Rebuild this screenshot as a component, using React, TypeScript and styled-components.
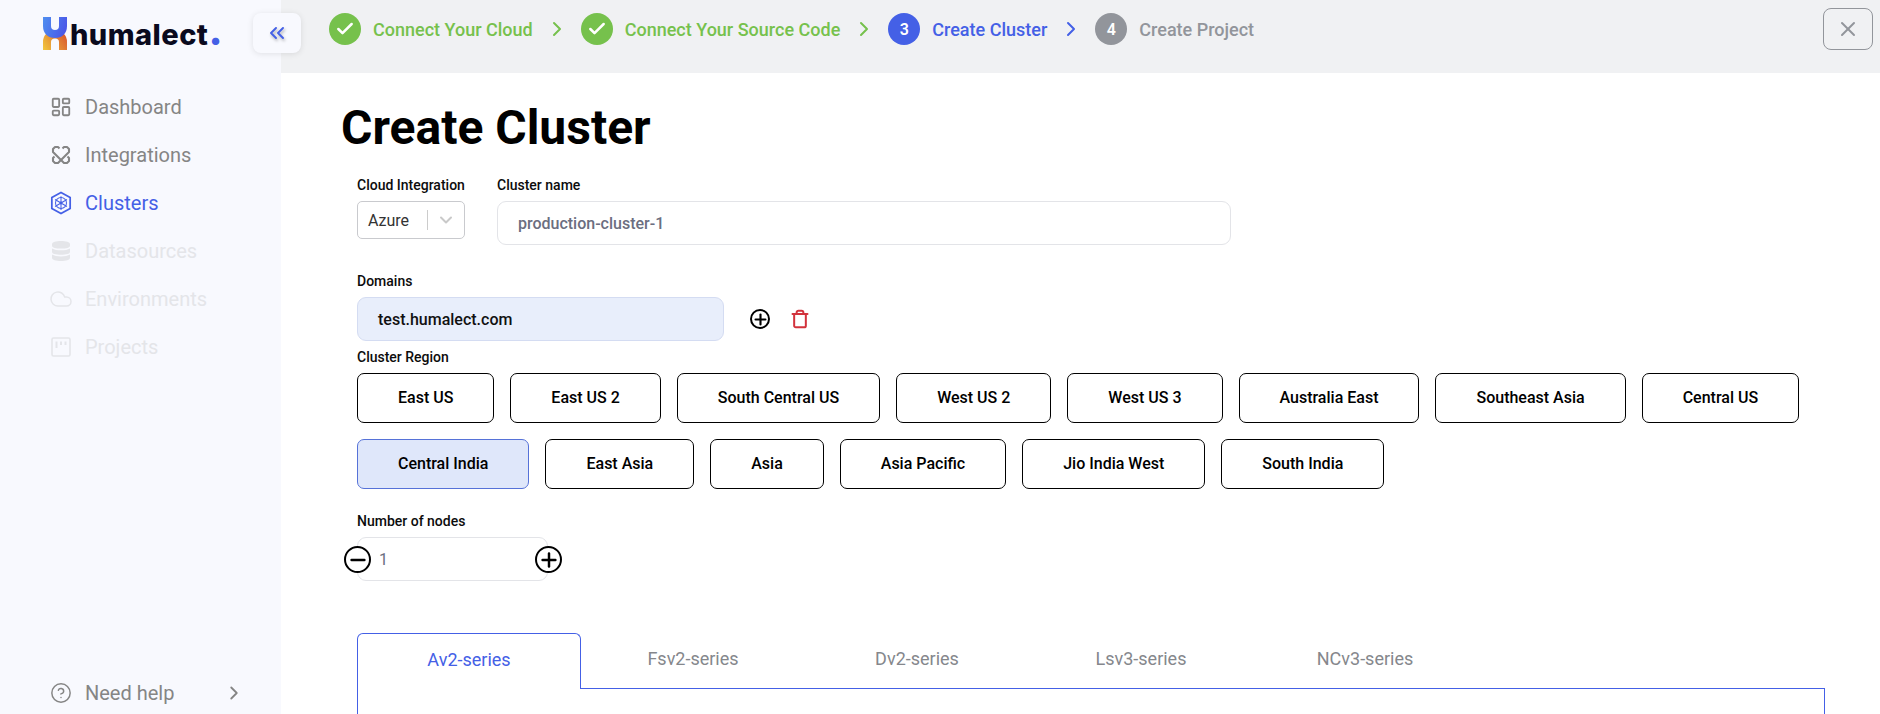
import React from 'react'
import styled, { createGlobalStyle } from 'styled-components'
import { Check, ChevronDown, ChevronRight, ChevronsLeft, Cloud, CircleHelp, LayoutDashboard, Plus, Minus, Trash, X } from 'lucide-react'

const GlobalStyle = createGlobalStyle`
  html, body { margin: 0; padding: 0; height: 100%; overflow: hidden; background: #fff; }
  body { font-family: Roboto, "Liberation Sans", sans-serif; }
`

const BLUE = '#4460e6'
const GREEN = '#76c14c'
const GREY = '#92959b'
const MUTED = '#e4e5e9'

const Shell = styled.div`
  display: flex;
  width: 1880px;
  height: 714px;
  overflow: hidden;
`

const Sidebar = styled.aside`
  position: relative;
  width: 281px;
  flex: none;
  display: flex;
  flex-direction: column;
  background: #f8f9fe;
  padding: 17px 0 0 43px;
  box-sizing: border-box;
`

const Logo = styled.div`
  display: flex;
  align-items: flex-start;
  height: 34px;
  svg { margin-right: 3px; flex: none; }
`

const LogoText = styled.div`
  font-family: Inter, sans-serif;
  font-weight: 800;
  font-size: 29px;
  letter-spacing: 0.45px;
  line-height: 34px;
  margin-top: 1px;
  color: #0a0a1e;
  white-space: nowrap;
  span {
    color: ${BLUE};
    font-size: 40px;
    line-height: 0;
    letter-spacing: 0;
  }
`

const CollapseButton = styled.button`
  position: absolute;
  top: 13px;
  left: 253px;
  width: 48px;
  height: 40px;
  display: flex;
  align-items: center;
  justify-content: center;
  padding: 0;
  border: none;
  border-radius: 8px;
  background: #f8f9fe;
  color: ${BLUE};
  box-shadow: 0 1px 6px rgba(0, 0, 0, 0.1);
  z-index: 2;
  svg { filter: drop-shadow(1px 2px 1.5px rgba(0, 0, 0, 0.3)); }
`

const Nav = styled.nav`
  display: flex;
  flex-direction: column;
  gap: 20px;
  margin-top: 42px;
  padding-left: 6px;
`

const NavItem = styled.div<{ $state?: 'active' | 'disabled' }>`
  display: flex;
  align-items: center;
  gap: 12px;
  height: 28px;
  font-size: 20px;
  color: ${({ $state }) => ($state === 'active' ? BLUE : $state === 'disabled' ? MUTED : '#858585')};
`

const NavIcon = styled.span`
  width: 24px;
  height: 26px;
  flex: none;
  display: flex;
  align-items: center;
  justify-content: center;
`

const HelpRow = styled(NavItem)`
  position: absolute;
  left: 49px;
  right: 36px;
  bottom: 7px;
  b { font-weight: 400; flex: 1; }
`

const Main = styled.main`
  flex: 1;
  min-width: 0;
  display: flex;
  flex-direction: column;
`

const Stepper = styled.header`
  height: 73px;
  flex: none;
  display: flex;
  align-items: center;
  background: #f0f1f3;
  padding: 0 7px 15px 48px;
  box-sizing: border-box;
`

const Step = styled.div<{ $color: string }>`
  display: flex;
  align-items: center;
  font-size: 18px;
  font-weight: 500;
  color: ${({ $color }) => $color};
  svg.arrow { margin: 0 12px 0 12px; }
`

const StepBadge = styled.span<{ $color: string }>`
  width: 32px;
  height: 32px;
  margin-right: 12px;
  flex: none;
  border-radius: 50%;
  display: flex;
  align-items: center;
  justify-content: center;
  background: ${({ $color }) => $color};
  color: #fff;
  font-size: 16px;
  font-weight: 600;
`

const CloseButton = styled.button`
  margin-left: auto;
  width: 50px;
  height: 42px;
  display: flex;
  align-items: center;
  justify-content: center;
  padding: 0;
  background: transparent;
  border: 1px solid ${GREY};
  border-radius: 8px;
  color: ${GREY};
`

const Content = styled.div`
  flex: 1;
  padding: 27px 0 0 60px;
`

const Title = styled.h1`
  margin: 0 0 21px;
  font-size: 48px;
  line-height: 56px;
  font-weight: 700;
  color: #000;
`

const Form = styled.div`
  padding-left: 16px;
  display: flex;
  flex-direction: column;
`

const Row = styled.div`
  display: flex;
  gap: 32px;
`

const Field = styled.div<{ $top?: number }>`
  display: flex;
  flex-direction: column;
  margin-top: ${({ $top }) => $top ?? 0}px;
`

const Label = styled.label`
  font-size: 14px;
  line-height: 16px;
  font-weight: 500;
  color: #0c0c0c;
  margin-bottom: 8px;
`

const Select = styled.div`
  width: 108px;
  height: 38px;
  box-sizing: border-box;
  border: 1px solid #c9cace;
  border-radius: 5px;
  display: flex;
  align-items: center;
  padding-left: 10px;
  font-size: 16px;
  color: #333;
  i {
    width: 1px;
    height: 20px;
    background: #ccc;
    margin-left: 18px;
    margin-right: 8px;
  }
  svg { color: #c9c9c9; flex: none; }
`

const TextBox = styled.div<{ $width: number; $filled?: boolean }>`
  width: ${({ $width }) => $width}px;
  height: 44px;
  box-sizing: border-box;
  border: 1px solid ${({ $filled }) => ($filled ? '#d4dcf2' : '#e3e4e8')};
  border-radius: 9px;
  background: ${({ $filled }) => ($filled ? '#e8eefb' : '#fff')};
  display: flex;
  align-items: center;
  padding-left: 20px;
  font-size: 16px;
  font-weight: 500;
  color: ${({ $filled }) => ($filled ? '#111' : '#6b6e80')};
`

const DomainRow = styled.div`
  display: flex;
  align-items: center;
`

const DomainActions = styled.div`
  display: flex;
  align-items: center;
  gap: 20px;
  margin-left: 26px;
`

const CircleIcon = styled.span<{ $size: number }>`
  width: ${({ $size }) => $size}px;
  height: ${({ $size }) => $size}px;
  box-sizing: border-box;
  border: ${({ $size }) => ($size > 24 ? 2.7 : 2)}px solid #000;
  border-radius: 50%;
  background: #fff;
  color: #000;
  display: flex;
  align-items: center;
  justify-content: center;
  flex: none;
  svg { flex: none; }
`

const Regions = styled.div`
  display: flex;
  flex-direction: column;
  gap: 16px;
`

const RegionRow = styled.div`
  display: flex;
  gap: 16px;
`

const RegionButton = styled.button<{ $selected?: boolean }>`
  height: 50px;
  padding: 0 40px 1px;
  box-sizing: border-box;
  border: 1px solid ${({ $selected }) => ($selected ? '#5672d8' : '#000')};
  border-radius: 7px;
  background: ${({ $selected }) => ($selected ? '#dfe7fa' : '#fff')};
  font-family: inherit;
  font-size: 16px;
  font-weight: 500;
  color: #000;
  white-space: nowrap;
`

const NodesInput = styled.div`
  position: relative;
  width: 191px;
  height: 44px;
  box-sizing: border-box;
  border: 1px solid #e3e4e8;
  border-radius: 9px;
  display: flex;
  align-items: center;
  padding-left: 21px;
  font-size: 16px;
  color: #6b6e80;
  > span:first-child { position: absolute; left: -14px; top: 8px; }
  > span:last-child { position: absolute; right: -15px; top: 8px; }
`

const TabBar = styled.div`
  display: flex;
  width: 1468px;
  margin-top: 52px;
`

const Tab = styled.div<{ $active?: boolean }>`
  width: 224px;
  height: 56px;
  box-sizing: border-box;
  display: flex;
  align-items: center;
  justify-content: center;
  padding-bottom: 4px;
  font-size: 18px;
  color: ${({ $active }) => ($active ? BLUE : '#85878c')};
  ${({ $active }) => ($active
    ? `border: 1px solid ${BLUE}; border-bottom: none; border-radius: 6px 6px 0 0;`
    : `border-bottom: 1px solid ${BLUE};`)}
`

const TabFill = styled.div`
  flex: 1;
  height: 56px;
  box-sizing: border-box;
  border-bottom: 1px solid ${BLUE};
`

const TabPanel = styled.div`
  width: 1468px;
  height: 200px;
  box-sizing: border-box;
  border-left: 1px solid ${BLUE};
  border-right: 1px solid ${BLUE};
`

const regionRows = [
  ['East US', 'East US 2', 'South Central US', 'West US 2', 'West US 3', 'Australia East', 'Southeast Asia', 'Central US'],
  ['Central India', 'East Asia', 'Asia', 'Asia Pacific', 'Jio India West', 'South India'],
]

const tabs = ['Fsv2-series', 'Dv2-series', 'Lsv3-series', 'NCv3-series']

function LogoMark() {
  return (
    <svg width="24" height="33" viewBox="0 0 24 33" fill="none">
      <defs>
        <linearGradient id="lg-top" x1="0" y1="0" x2="24" y2="8" gradientUnits="userSpaceOnUse">
          <stop offset="0" stopColor="#4f8ff0" />
          <stop offset="1" stopColor="#4a58e8" />
        </linearGradient>
        <linearGradient id="lg-bottom" x1="0" y1="33" x2="24" y2="18" gradientUnits="userSpaceOnUse">
          <stop offset="0" stopColor="#f2c83e" />
          <stop offset="1" stopColor="#d8562e" />
        </linearGradient>
      </defs>
      <path d="M4 33V25C4 20 7 17.5 12 17.5C17 17.5 20 20 20 25V33" stroke="url(#lg-bottom)" strokeWidth="8" />
      <path d="M4 0V9C4 14 7 17 12 17C17 17 20 14 20 9V0" stroke="url(#lg-top)" strokeWidth="8" />
    </svg>
  )
}

function ClusterIcon() {
  return (
    <svg width="22" height="24" viewBox="0 0 24 26" fill="none" stroke={BLUE}>
      <path d="M12 1.5L22 7V19L12 24.5L2 19V7L12 1.5Z" strokeWidth="1.9" />
      <circle cx="12" cy="13" r="6" strokeWidth="1.1" />
      <path d="M12 5.5V20.5M5.5 9.2L18.5 16.8M18.5 9.2L5.5 16.8" strokeWidth="1.1" />
      <circle cx="12" cy="13" r="1.6" fill={BLUE} stroke="none" />
    </svg>
  )
}

function IntegrationIcon() {
  return (
    <svg width="20" height="20" viewBox="0 0 20 20" fill="none" stroke="#858585" strokeWidth="2.1" strokeLinejoin="round">
      <path d="M8.5 3.5L7 2H4L2 4V7L13 18H16L18 16V13L16.5 11.5" />
      <path d="M11.5 3.5L13 2H16L18 4V7L7 18H4L2 16V13L3.5 11.5" />
    </svg>
  )
}

function DatabaseIcon() {
  return (
    <svg width="20" height="22" viewBox="0 0 20 22" fill={MUTED}>
      <path d="M10 1C5 1 1 2.3 1 4V6C1 7.7 5 8.6 10 8.6S19 7.7 19 6V4C19 2.3 15 1 10 1Z" />
      <path d="M1 8.4V12C1 13.7 5 14.8 10 14.8S19 13.7 19 12V8.4C17 9.7 13.5 10.2 10 10.2S3 9.7 1 8.4Z" />
      <path d="M1 14.4V18C1 19.7 5 21 10 21S19 19.7 19 18V14.4C17 15.7 13.5 16.4 10 16.4S3 15.7 1 14.4Z" />
    </svg>
  )
}

function ProjectsIcon() {
  return (
    <svg width="20" height="20" viewBox="0 0 20 20" fill="none" stroke={MUTED} strokeWidth="1.6">
      <rect x="1" y="1" width="18" height="18" rx="1.5" />
      <path d="M5.5 4.5V11M10 4.5V8M14.5 4.5V8" strokeWidth="2" />
    </svg>
  )
}

export default function App() {
  return (
    <Shell>
      <GlobalStyle />
      <Sidebar>
        <Logo>
          <LogoMark />
          <LogoText>humalect<span>.</span></LogoText>
        </Logo>
        <CollapseButton aria-label="Collapse">
          <ChevronsLeft size={24} strokeWidth={1.9} />
        </CollapseButton>
        <Nav>
          <NavItem><NavIcon><LayoutDashboard size={22} strokeWidth={2} /></NavIcon>Dashboard</NavItem>
          <NavItem><NavIcon><IntegrationIcon /></NavIcon>Integrations</NavItem>
          <NavItem $state="active"><NavIcon><ClusterIcon /></NavIcon>Clusters</NavItem>
          <NavItem $state="disabled"><NavIcon><DatabaseIcon /></NavIcon>Datasources</NavItem>
          <NavItem $state="disabled"><NavIcon><Cloud size={24} strokeWidth={1.5} /></NavIcon>Environments</NavItem>
          <NavItem $state="disabled"><NavIcon><ProjectsIcon /></NavIcon>Projects</NavItem>
        </Nav>
        <HelpRow>
          <NavIcon><CircleHelp size={22} strokeWidth={1.6} /></NavIcon>
          <b>Need help</b>
          <ChevronRight size={22} strokeWidth={2} />
        </HelpRow>
      </Sidebar>
      <Main>
        <Stepper>
          <Step $color={GREEN}>
            <StepBadge $color={GREEN}><Check size={20} strokeWidth={3} /></StepBadge>
            Connect Your Cloud
            <ChevronRight className="arrow" size={24} strokeWidth={2} />
          </Step>
          <Step $color={GREEN}>
            <StepBadge $color={GREEN}><Check size={20} strokeWidth={3} /></StepBadge>
            Connect Your Source Code
            <ChevronRight className="arrow" size={24} strokeWidth={2} />
          </Step>
          <Step $color={BLUE}>
            <StepBadge $color={BLUE}>3</StepBadge>
            Create Cluster
            <ChevronRight className="arrow" size={24} strokeWidth={2} />
          </Step>
          <Step $color={GREY}>
            <StepBadge $color={GREY}>4</StepBadge>
            Create Project
          </Step>
          <CloseButton aria-label="Close"><X size={24} strokeWidth={2} /></CloseButton>
        </Stepper>
        <Content>
          <Title>Create Cluster</Title>
          <Form>
            <Row>
              <Field>
                <Label>Cloud Integration</Label>
                <Select>Azure<i /><ChevronDown size={20} strokeWidth={2.4} /></Select>
              </Field>
              <Field>
                <Label>Cluster name</Label>
                <TextBox $width={734}>production-cluster-1</TextBox>
              </Field>
            </Row>
            <Field $top={28}>
              <Label>Domains</Label>
              <DomainRow>
                <TextBox $width={367} $filled>test.humalect.com</TextBox>
                <DomainActions>
                  <CircleIcon $size={20}><Plus size={17} strokeWidth={3} /></CircleIcon>
                  <Trash size={20} color="#d2323c" strokeWidth={2.4} />
                </DomainActions>
              </DomainRow>
            </Field>
            <Field $top={8}>
              <Label>Cluster Region</Label>
              <Regions>
                {regionRows.map((row, i) => (
                  <RegionRow key={i}>
                    {row.map(name => (
                      <RegionButton key={name} $selected={name === 'Central India'}>{name}</RegionButton>
                    ))}
                  </RegionRow>
                ))}
              </Regions>
            </Field>
            <Field $top={24}>
              <Label>Number of nodes</Label>
              <NodesInput>
                <CircleIcon $size={27}><Minus size={22} strokeWidth={2.7} /></CircleIcon>
                1
                <CircleIcon $size={27}><Plus size={22} strokeWidth={2.7} /></CircleIcon>
              </NodesInput>
            </Field>
            <TabBar>
              <Tab $active>Av2-series</Tab>
              {tabs.map(name => <Tab key={name}>{name}</Tab>)}
              <TabFill />
            </TabBar>
            <TabPanel />
          </Form>
        </Content>
      </Main>
    </Shell>
  )
}
